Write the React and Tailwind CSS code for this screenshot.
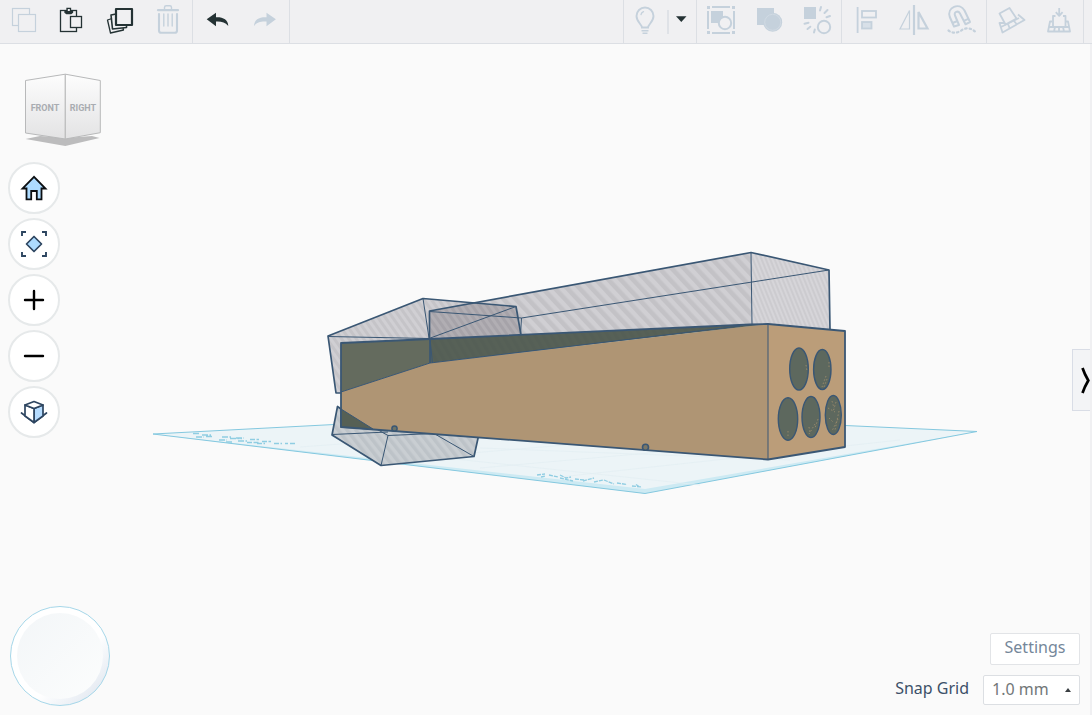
import React, { useState } from 'react';

const MUTED = '#c5d1dc';
const DARK = '#243234';
const EDGE = '#3a5774';

function ToolButton({ label, children }) {
  return (
    <button type="button" aria-label={label} title={label} className="w-12 h-full shrink-0">
      <svg viewBox="0 0 48 43" className="w-12 h-[43px]" fill="none">
        {children}
      </svg>
    </button>
  );
}

function ToolGroup({ children, className = '' }) {
  return <div className={`flex h-full shrink-0 border-[#dcdfe4] ${className}`}>{children}</div>;
}

function Toolbar() {
  return (
    <header className="flex h-11 justify-between bg-[#f0f0f2] border-b border-[#dcdfe4]">
      <div className="flex h-full">
        <ToolGroup className="border-r">
          <ToolButton label="Copy">
            <g stroke={MUTED} strokeWidth="1.2">
              <rect x="12.5" y="8.5" width="17" height="17" />
              <rect x="18.5" y="14.5" width="17" height="17" fill="#f0f0f2" />
            </g>
          </ToolButton>
          <ToolButton label="Paste">
            <g stroke={DARK} strokeWidth="1.3">
              <rect x="12.5" y="10.5" width="16" height="21" />
              <path d="M17 11h2V8.500h3.500V11h2v1.500l-1.500 1h-4.500l-1.500-1z" fill={DARK} />
              <rect x="22.500" y="16.500" width="11" height="11" fill="#f0f0f2" />
            </g>
            <rect x="19.800" y="9" width="2" height="2" fill="#f0f0f2" />
          </ToolButton>
          <ToolButton label="Duplicate">
            <g stroke={DARK} strokeLinejoin="round">
              <path d="M16 18.500l-4.500 1.500l3 13l13-3l-.5-2" strokeWidth="1.300" />
              <path d="M20 14l-5 1l1.500 14l14-1.500v-2" strokeWidth="1.600" />
              <rect x="20" y="9" width="16" height="16" strokeWidth="2.200" fill="#f0f0f2" />
            </g>
          </ToolButton>
          <ToolButton label="Delete">
            <g stroke={MUTED} strokeLinecap="round">
              <path d="M14 10.200h20" strokeWidth="2.200" />
              <path d="M20.500 9v-1.500q0-1.700 1.700-1.700h3.600q1.700 0 1.700 1.700V9" strokeWidth="1.400" />
              <path d="M15 14v16.500q0 2.300 2.300 2.300h13.400q2.300 0 2.300-2.300V14" strokeWidth="2.100" />
              <path d="M19.800 14v12M24 14v12M28.200 14v12" strokeWidth="1.400" />
            </g>
          </ToolButton>
        </ToolGroup>
        <ToolGroup className="border-r">
          <ToolButton label="Undo">
            <path d="M13.700 19.300L23 12.700V17.300C30 17 35 19.500 35.300 26C32 22 28 21.200 23 21.500V26.200Z" fill={DARK} />
          </ToolButton>
          <ToolButton label="Redo">
            <path d="M34.900 19.300L25.500 12.700V17.300C18 17 13.300 19.500 13 26C16 22 20 21.200 25.500 21.500V26.200Z" fill={MUTED} />
          </ToolButton>
        </ToolGroup>
      </div>

      <div className="flex h-full pr-2">
        <ToolGroup className="border-l items-center">
          <button type="button" aria-label="Show all" className="w-[43px] h-full">
            <svg viewBox="0 0 43 43" className="w-[43px] h-[43px]" fill="none" stroke={MUTED}>
              <path d="M18 27.500c0-3-5.500-5.500-5.500-11.500a8.500 8.500 0 0 1 17 0c0 6-5.500 8.500-5.500 11.500z" strokeWidth="1.900" />
              <path d="M17 14.500q.5-2 2.500-2.800" strokeWidth="1.300" strokeLinecap="round" />
              <path d="M17.500 30.700h7M18.500 33.300h5" strokeWidth="1.600" />
            </svg>
          </button>
          <span className="w-0.5 h-6 bg-[#dfe2e7]" />
          <button type="button" aria-label="Visibility options" className="w-[27px] h-full">
            <svg viewBox="0 0 27 43" className="w-[27px] h-[43px]">
              <path d="M7 16.300h10.500l-5.200 5.700z" fill={DARK} />
            </svg>
          </button>
        </ToolGroup>
        <ToolGroup className="border-l">
          <ToolButton label="Group">
            <g fill={MUTED}>
              <rect x="10" y="6" width="3" height="3" />
              <rect x="35" y="6" width="3" height="3" />
              <rect x="10" y="31" width="3" height="3" />
              <rect x="35" y="31" width="3" height="3" />
              <rect x="14" y="11" width="12" height="12" />
            </g>
            <g stroke={MUTED} strokeWidth="2">
              <path d="M15 7h18M15 33h18M11 11v18M37 11v18" />
              <circle cx="28" cy="23" r="6.200" fill="#f0f0f2" />
            </g>
          </ToolButton>
          <ToolButton label="Union">
            <rect x="12" y="8" width="17" height="17" fill={MUTED} />
            <circle cx="27.700" cy="22.300" r="9.500" fill={MUTED} />
            <circle cx="27.700" cy="22.300" r="8" stroke="#d3dce5" strokeWidth=".8" />
          </ToolButton>
          <ToolButton label="Ungroup">
            <rect x="11" y="7" width="12" height="12" fill={MUTED} />
            <g stroke={MUTED} strokeWidth="2" strokeLinecap="round">
              <circle cx="31" cy="27" r="6.200" />
              <path d="M28 7l-1 3.500M34.500 10l-3 3M37 16l-3.500 1.200M11.500 23.800l4-1M14.500 29l2.800-2.300M21 32.500l.8-3" />
            </g>
          </ToolButton>
        </ToolGroup>
        <ToolGroup className="border-l">
          <ToolButton label="Align">
            <g stroke={MUTED} strokeWidth="1.800">
              <path d="M15.600 7v26" />
              <rect x="20" y="11" width="14" height="6.500" />
              <rect x="20" y="22" width="9.500" height="6.500" fill="#d8e0e8" />
            </g>
          </ToolButton>
          <ToolButton label="Mirror">
            <g stroke={MUTED}>
              <path d="M24 5v30" strokeWidth="2.200" />
              <path d="M19.500 10.500V29h-9.500z" strokeWidth="1.200" />
              <path d="M28.500 12v16.500h9z" strokeWidth="2.200" />
            </g>
          </ToolButton>
          <ToolButton label="Cruise">
            <g stroke={MUTED} strokeWidth="2" strokeLinejoin="round">
              <path d="M16 26.500L11.800 17C8.500 7 21.500 2 26.500 10.500L32 22L27.500 24.300L22 13.500C20 10 15.500 12 17 15.500L21 25Z" />
              <path d="M14.500 23l5-2M25.800 20.800l4.500-2" />
              <path d="M10.500 30.500q6 4.500 13-.2t14.500 2" strokeWidth="2.200" strokeDasharray="1.500 3" strokeLinecap="round" />
            </g>
          </ToolButton>
        </ToolGroup>
        <ToolGroup className="border-x">
          <ToolButton label="Workplane">
            <g stroke={MUTED} strokeWidth="1.800" strokeLinejoin="round">
              <path d="M17 23l-4.500 0l3 9.500l22-12.500l-6.500-5.500M14 27l18-9M21 24l1.500 4M27 21l3 3.500" />
              <path d="M12.500 13.500L22.500 8L29.500 18.500L18.500 24.500Z" fill="#f0f0f2" />
            </g>
          </ToolButton>
          <ToolButton label="Drop to workplane">
            <g stroke={MUTED} strokeWidth="1.800" strokeLinejoin="round">
              <path d="M17 21.500h-2l-2 10h22l-2-10h-2M14 27h20M20 27l-1 4.500M28 27l1 4.500M24 27v4.500" />
              <path d="M20.500 16h-2.500v11h12.500V16H28" fill="#f0f0f2" />
              <path d="M24.200 8v7.500M20.800 12.200l3.400 3.600l3.400-3.600" />
            </g>
          </ToolButton>
        </ToolGroup>
      </div>
    </header>
  );
}

function Scene() {
  const holes = [
    [799, 369, 9.3, 21],
    [822.3, 369.5, 8.7, 20],
    [788, 419, 9.7, 21.3],
    [811, 417, 9, 20.5],
    [833.3, 415, 8, 19.5],
  ];

  return (
    <svg viewBox="0 44 1090 671" className="absolute inset-0 w-full h-full" fill="none" strokeLinejoin="round" aria-hidden="true">
      <defs>
        <pattern id="stripeWide" width="9" height="9" patternUnits="userSpaceOnUse" patternTransform="rotate(-43)">
          <rect width="9" height="9" fill="#d0cfd3" />
          <rect width="4.500" height="9" fill="#c3c2c6" />
        </pattern>
        <pattern id="stripe" width="6" height="6" patternUnits="userSpaceOnUse" patternTransform="rotate(-35)">
          <rect width="6" height="6" fill="#d0cfd3" />
          <rect width="3" height="6" fill="#c5c4c8" />
        </pattern>
        <pattern id="stripeFine" width="4" height="4" patternUnits="userSpaceOnUse" patternTransform="rotate(-22)">
          <rect width="4" height="4" fill="#d6d5d9" />
          <rect width="2" height="4" fill="#cccbcf" />
        </pattern>
        <pattern id="stripeDark" width="6" height="6" patternUnits="userSpaceOnUse" patternTransform="rotate(-35)">
          <rect width="6" height="6" fill="#b1aeb3" />
          <rect width="3" height="6" fill="#a6a3a9" />
        </pattern>
        <pattern id="stripeFloor" width="7" height="7" patternUnits="userSpaceOnUse" patternTransform="rotate(-38)">
          <rect width="7" height="7" fill="#c9ced2" />
          <rect width="3.500" height="7" fill="#bdc3c8" />
        </pattern>
        <pattern id="stripeGreen" width="7" height="7" patternUnits="userSpaceOnUse" patternTransform="rotate(-30)">
          <rect width="7" height="7" fill="#576157" />
          <rect width="3.500" height="7" fill="#555f56" />
        </pattern>
      </defs>

      {/* Workplane */}
      <path d="M153 434L561 412.600L977 431.500L645 493.500Z" fill="#ecf4f7" />
      <path d="M153 434L645 489L977 431.500L645 493.500Z" fill="#cdeaf3" />
      <path d="M153 434L561 412.600L977 431.500L645 493.500Z" stroke="#84c8df" />
      <g stroke="#e3eef2" strokeWidth=".7">
        <path d="M300 447L560 428M400 459L720 432M480 468L830 437M560 477L900 440M370 450L700 485M480 448L790 460" />
      </g>
      <g stroke="#8fcde2" strokeWidth="1.300">
        <path d="M193 433.500h7M202 435h9M196 437h8M206 436.500h6M222 437h9M219 440h8M230 438.500h12M226 442h7M238 441h9M236 438h8" strokeDasharray="6 1.500 2 1" />
        <path d="M250 439.500h9M247 442.500h12M262 441.500h9M257 443.500h8M274 443.500h8M285 443.500h3M290 443.500h5" strokeDasharray="5 1.500" />
        <path d="M537 475l8-1M541 477l4-1M549 475l9 2M560 475l6 3l5-1M560 478l13 3M575 479l9 1M583 481l11-3M594 482l9-2M604 480l10 4M617 483l10 1.500M632 486l10 1M636 484.500l3 2" strokeDasharray="4 1" />
      </g>

      {/* Lower hole box */}
      <g stroke={EDGE}>
        <path d="M337.500 406.500L332 435L381 465.500L474 456.500L478.500 436L341 427V409Z" fill="url(#stripeFloor)" strokeWidth="1.700" />
        <path d="M332 434.500L388 432M341 409L388 435.500L381 465.500M388 435.500L434 433.500L474 456.500" />
      </g>

      {/* Upper hole boxes */}
      <path d="M328 336L423 298.500L516 306.500L521 340L341 393H336Z" fill="url(#stripe)" />
      <path d="M429.500 311L751 252.500V330L429.500 340Z" fill="url(#stripeWide)" />
      <path d="M751 252.500L829 270L830 332H751Z" fill="url(#stripeFine)" />
      <path d="M429.500 311L475 303L516 306.500L521 336L429.500 340Z" fill="url(#stripeDark)" />
      <g stroke={EDGE}>
        <path d="M341 393H336L328 336L423 298.500L516 306.500L521 335" strokeWidth="1.700" />
        <path d="M429.500 338V311L751 252.500L829 270L830 330" strokeWidth="1.700" />
        <path d="M328 336.500L429 338.500L516 306.500M423 298.500L429 338M429.500 311.500L521.500 318L829 270M521.500 318L520.500 335M751 252.500L752 325" />
      </g>

      {/* Solid body */}
      <path d="M341 392L430 363L768 324V459.500L341 427Z" fill="#af9574" />
      <path d="M341 343L430 339V363L341 392Z" fill="#646b5e" />
      <path d="M430 339L768 324L430 363Z" fill="url(#stripeGreen)" />
      <path d="M341 409L373 429L341 427Z" fill="#566055" />
      <path d="M768 324L845 331V447L768 459.500Z" fill="#bb9d79" />
      <g stroke={EDGE}>
        <path d="M341 343L430 339L750 324.500L768 324L845 331V447L768 459.500L341 427Z" strokeWidth="1.800" />
        <path d="M430 339V363" strokeWidth="1.700" />
        <path d="M341 392L430 363L740 326M430 339L432.500 363M341 409L373 429M768 324V459.500" />
        <circle cx="394.500" cy="428.500" r="2.600" strokeWidth="1.500" fill="#6e7468" />
        <circle cx="645.500" cy="447.300" r="3" strokeWidth="1.600" fill="#7b7767" />
        {holes.map(([cx, cy, rx, ry]) => (
          <ellipse key={cx} cx={cx} cy={cy} rx={rx} ry={ry} strokeWidth="1.400" fill="#5d685e" />
        ))}
      </g>
      <g stroke="#a18e6d" strokeWidth=".8" strokeDasharray="1.500 2">
        <path d="M826 376l-4 11M827 379l-3 8M829 362v6M806 365l1 6M788 431v6M815 424l-6 10M818 419l-3 9M809 427l1 6M839 411l-4 19M836 402l-3 10M838 419l-6 12M828 408l7 4M829 418l4 4M832 401l2 7" />
      </g>
    </svg>
  );
}

function ViewCube() {
  return (
    <button type="button" aria-label="View cube" className="block ml-4 w-[78px] h-[76px]">
      <svg viewBox="24 72 78 76" className="w-[78px] h-[76px]" strokeLinejoin="round">
        <defs>
          <linearGradient id="cubeFace" x1="0" y1="0" x2="0" y2="1">
            <stop offset="0" stopColor="#fdfdfd" />
            <stop offset="1" stopColor="#e3e3e4" />
          </linearGradient>
        </defs>
        <path d="M25.500 139L40 136L65.300 138L92 136L99.500 138L65.300 146Z" fill="#bcbcbd" />
        <path d="M25.500 80.500L65.300 74.200V139L25.500 133Z" fill="url(#cubeFace)" stroke="#b8b9ba" />
        <path d="M65.300 74.200L100.300 80.500V132.700L65.300 139Z" fill="url(#cubeFace)" stroke="#b8b9ba" />
        <g fill="#a9acb1" fontSize="9" fontWeight="700" textAnchor="middle" fontFamily="Roboto, 'Open Sans', sans-serif">
          <text x="45" y="111">FRONT</text>
          <text x="83" y="111">RIGHT</text>
        </g>
      </svg>
    </button>
  );
}

function RoundButton({ label, children }) {
  return (
    <button type="button" aria-label={label} title={label} className="flex items-center justify-center w-[52px] h-[52px] rounded-full bg-white border-2 border-[#e6e9ea]">
      <svg viewBox="0 0 32 32" className="w-8 h-8 shrink-0" fill="none">
        {children}
      </svg>
    </button>
  );
}

function ViewControls() {
  return (
    <div className="flex flex-col gap-1 mt-[14px]">
      <RoundButton label="Home view">
        <path d="M16 4.800L4.500 16.500H8.500V27.300H13.200V19H18.800V27.300H23.500V16.500H27.500Z" fill="#addbff" stroke="#0c0f12" strokeWidth="1.800" />
      </RoundButton>
      <RoundButton label="Fit all in view">
        <path d="M16 8.500L23.500 16L16 23.500L8.500 16Z" fill="#addbff" stroke="#2d4560" strokeWidth="1.700" strokeLinejoin="round" />
        <path d="M4 8V4H8M24 4H28V8M28 24V28H24M8 28H4V24" stroke="#2d4560" strokeWidth="1.900" />
      </RoundButton>
      <RoundButton label="Zoom in">
        <path d="M16 7V25M7 16H25" stroke="#000" strokeWidth="2.400" strokeLinecap="round" />
      </RoundButton>
      <RoundButton label="Zoom out">
        <path d="M7 16H25" stroke="#000" strokeWidth="2.400" strokeLinecap="round" />
      </RoundButton>
      <RoundButton label="Perspective">
        <g stroke="#2d4560" strokeWidth="1.700" strokeLinejoin="round" strokeLinecap="round">
          <path d="M3.500 17L16 26.500L28.500 17" />
          <path d="M16 12.500L25 9V20L16 26.500Z" fill="#b5dcff" />
          <path d="M16 12.500L7 9V20L16 26.500Z" fill="#fff" />
          <path d="M7 9L16 5.500L25 9L16 12.500Z" fill="#fff" />
        </g>
      </RoundButton>
    </div>
  );
}

function Joystick() {
  return (
    <div className="ml-0.5 w-[100px] h-[100px] rounded-full border border-[#a6d7e9] bg-linear-to-br from-white from-60% to-[#d9e1ec] p-1.5">
      <div className="w-full h-full rounded-full bg-linear-to-br from-[#f3f6f8] to-[#fcfdfd]" />
    </div>
  );
}

export default function App() {
  const [snap, setSnap] = useState('1.0 mm');

  return (
    <div className="min-h-screen flex flex-col bg-[#fafafa] font-['Noto_Sans','Open_Sans',sans-serif]">
      <Toolbar />

      <main className="relative flex-1 flex flex-col justify-between overflow-hidden border-r-2 border-[#f0f0f2]">
        <Scene />

        <div className="relative flex-1 flex flex-col justify-between items-start pt-7 pl-2 pb-[9px]">
          <div>
            <ViewCube />
            <ViewControls />
          </div>
          <Joystick />
        </div>

        {/* Shapes panel handle */}
        <button type="button" aria-label="Open shapes panel" className="absolute -right-0.5 top-1/2 -translate-y-1/2 w-5 h-[62px] bg-[#f3f4f6] border border-r-0 border-[#d9dde6]">
          <svg viewBox="0 0 19 60" className="w-full h-[60px]" fill="none">
            <path d="M9.500 18Q11.500 24 15.300 30.500Q11.500 37 9.500 43" stroke="#000" strokeWidth="2.700" />
          </svg>
        </button>

        {/* Grid settings */}
        <div className="absolute right-[10px] bottom-[10px] flex flex-col items-end gap-[10px]">
          <button type="button" className="w-[90px] h-8 pb-1 rounded-xs border border-[#e2e4e7] bg-white text-base leading-6 text-[#75879a]">
            Settings
          </button>
          <div className="flex items-center">
            <label htmlFor="snap" className="mr-[14px] pb-1 text-base leading-6 text-[#3c5068]">Snap Grid</label>
            <div className="relative">
              <select
                id="snap"
                value={snap}
                onChange={(e) => setSnap(e.target.value)}
                className="block appearance-none w-[97px] h-[30px] pl-2 pb-0.5 rounded-xs border border-[#dcdfe3] bg-white text-base leading-6 text-[#727779]"
              >
                <option>0.5 mm</option>
                <option>1.0 mm</option>
                <option>2.0 mm</option>
              </select>
              <svg viewBox="0 0 8 4" className="absolute right-2 top-[13px] w-2 h-1 pointer-events-none">
                <path d="M1 4L4 0L7 4Z" fill="#3a3f42" />
              </svg>
            </div>
          </div>
        </div>
      </main>
    </div>
  );
}
